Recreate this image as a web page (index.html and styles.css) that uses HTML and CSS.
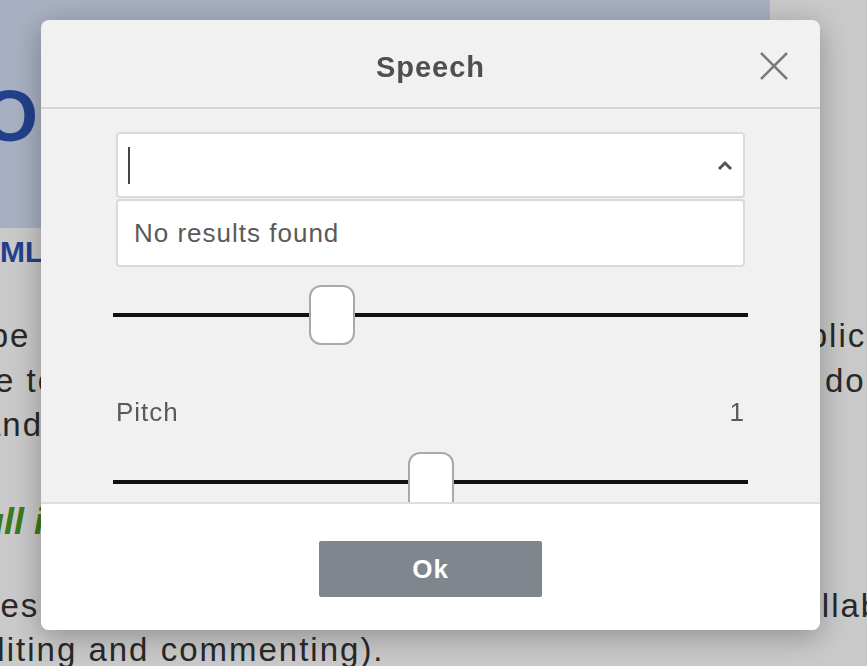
FILE: index.html
```html
<!DOCTYPE html>
<html lang="en">
<head>
  <meta charset="UTF-8" />
  <meta name="viewport" content="width=device-width, initial-scale=1" />
  <title>Speech</title>
  <link rel="stylesheet" href="styles.css">
</head>
<body>

  <div class="page">
    <div class="banner">
      <h1>Overview</h1>
    </div>
    <div class="subtitle">HTML editor with speech</div>

    <div class="para">
      <div class="line line-a"><span>to be converted to speech in any web</span><span>application</span></div>
      <div class="line line-b"><span>re to listen to the text of your</span><span>documents</span></div>
      <div class="line"><span>and edit them at the same time.</span></div>
    </div>

    <h2>Full integration</h2>

    <div class="para">
      <div class="line line-c"><span>features the speech plugin with other</span><span>collaboration</span></div>
      <div class="line line-d"><span>editing and commenting).</span></div>
    </div>
  </div>

  <div class="backdrop"></div>

  <div class="modal">
    <div class="modal-head">
      <span></span>
      <span class="modal-title">Speech</span>
      <button class="close" aria-label="Close">
        <svg width="28" height="28" viewBox="0 0 28 28"><path d="M1 1 L27 27 M27 1 L1 27" stroke="#7a7a7a" stroke-width="2.5" fill="none"/></svg>
      </button>
    </div>

    <div class="modal-body">
      <div class="combo">
        <div class="combo-input">
          <span class="caret"></span>
          <svg class="chevron" width="16" height="11" viewBox="0 0 16 11"><polyline points="2,9 8,3 14,9" stroke="#555" stroke-width="3" fill="none"/></svg>
        </div>
        <div class="dropdown">No results found</div>
      </div>

      <div class="field">
        <div class="field-head"><span>Rate</span><span>1</span></div>
        <input type="range" min="0.5" max="2" step="0.1" value="1" />
      </div>

      <div class="field">
        <div class="field-head"><span>Pitch</span><span>1</span></div>
        <input type="range" min="0" max="2" step="0.1" value="1" />
      </div>
    </div>

    <div class="modal-foot">
      <button class="ok">Ok</button>
    </div>
  </div>

</body>
</html>
```

FILE: styles.css
```css
* {
  box-sizing: border-box;
}
body {
  margin: 0;
  font-family: "Liberation Sans", Arial, sans-serif;
  background-color: #fff;
  color: #333;
  width: 867px;
  height: 666px;
  overflow: hidden;
}

/* page behind the dialog, scrolled a little to the right */
.page {
  margin-left: -18px;
  white-space: nowrap;
}
.banner {
  width: 788px;
  height: 228px;
  background-color: #d5dff6;
  padding-top: 80px;
}
h1 {
  margin: 0;
  font-size: 72px;
  line-height: 72px;
  letter-spacing: 10px;
  color: #2b52b1;
}
.subtitle {
  margin: 2px 0 0 -22px;
  font-size: 30px;
  line-height: 44px;
  font-weight: bold;
  color: #2b52b1;
}
.para {
  margin-top: 40px;
  font-size: 33px;
  letter-spacing: 2px;
  line-height: 44.5px;
}
.line {
  display: grid;
  grid-template-columns: 900px auto;
}
.line-a {
  grid-template-columns: 786px auto;
}
.line-a span:first-child {
  margin-left: -35px;
}
.line-b {
  grid-template-columns: 843px auto;
}
.line-c {
  grid-template-columns: 801px auto;
}
.line-c span:first-child {
  margin-left: -78px;
}
.line-d span:first-child {
  margin-left: -16px;
}
h2 {
  margin: 50px 0 0 -22px;
  font-size: 36px;
  line-height: 48px;
  font-style: italic;
  color: #4b9a26;
}
h2 + .para {
  margin-top: 38px;
}

.backdrop {
  position: fixed;
  inset: 0;
  background-color: rgba(0, 0, 0, 0.21);
}

/* dialog */
.modal {
  position: fixed;
  left: 41px;
  top: 20px;
  width: 779px;
  height: 610px;
  display: flex;
  flex-direction: column;
  background-color: #f1f1f1;
  border-radius: 8px;
  overflow: hidden;
  box-shadow: 0 6px 30px rgba(0, 0, 0, 0.3);
  color: #5a5a5a;
}
.modal-head {
  height: 89px;
  flex: none;
  display: grid;
  grid-template-columns: 1fr auto 1fr;
  align-items: center;
  border-bottom: 2px solid #d5d5d5;
}
.modal-title {
  font-size: 29px;
  font-weight: bold;
  letter-spacing: 1px;
  color: #4f4f4f;
  padding-top: 8px;
}
.close {
  justify-self: end;
  margin-right: 32px;
  margin-top: 4px;
  width: 28px;
  height: 28px;
  padding: 0;
  border: none;
  background: none;
  display: flex;
}
.modal-body {
  flex: 1;
  overflow: hidden;
  padding: 23px 72px 0;
}
.combo {
  position: relative;
  margin: 0 3px;
}
.combo-input {
  height: 66px;
  display: flex;
  align-items: center;
  padding: 0 10px;
  background-color: #fff;
  border: 2px solid #dadada;
  border-radius: 4px;
}
.caret {
  width: 2px;
  height: 37px;
  background-color: #444;
}
.chevron {
  margin-left: auto;
}
.dropdown {
  position: absolute;
  top: calc(100% + 1px);
  left: 0;
  right: 0;
  height: 68px;
  display: flex;
  align-items: center;
  padding-left: 16px;
  background-color: #fff;
  border: 2px solid #dadada;
  border-radius: 4px;
  font-size: 26px;
  letter-spacing: 1px;
}
.field {
  margin-top: 27px;
}
.field + .field {
  margin-top: 47px;
}
.field-head {
  height: 40px;
  display: flex;
  justify-content: space-between;
  align-items: center;
  margin: 0 3px 20px;
  font-size: 26px;
  letter-spacing: 1px;
}
input[type="range"] {
  -webkit-appearance: none;
  appearance: none;
  display: block;
  width: 100%;
  height: 60px;
  margin: 0;
  background: transparent;
}
input[type="range"]::-webkit-slider-runnable-track {
  height: 4px;
  background-color: #111;
}
input[type="range"]::-webkit-slider-thumb {
  -webkit-appearance: none;
  width: 46px;
  height: 60px;
  margin-top: -28px;
  background-color: #fff;
  border: 2px solid #a9a9a9;
  border-radius: 12px;
}
.modal-foot {
  height: 128px;
  flex: none;
  display: flex;
  justify-content: center;
  padding-top: 37px;
  background-color: #fff;
  border-top: 2px solid #dedede;
}
.ok {
  width: 223px;
  height: 56px;
  border: none;
  border-radius: 2px;
  background-color: #7f868e;
  color: #fff;
  font-family: "Liberation Sans", Arial, sans-serif;
  font-size: 26px;
  font-weight: bold;
  letter-spacing: 1px;
}
```
